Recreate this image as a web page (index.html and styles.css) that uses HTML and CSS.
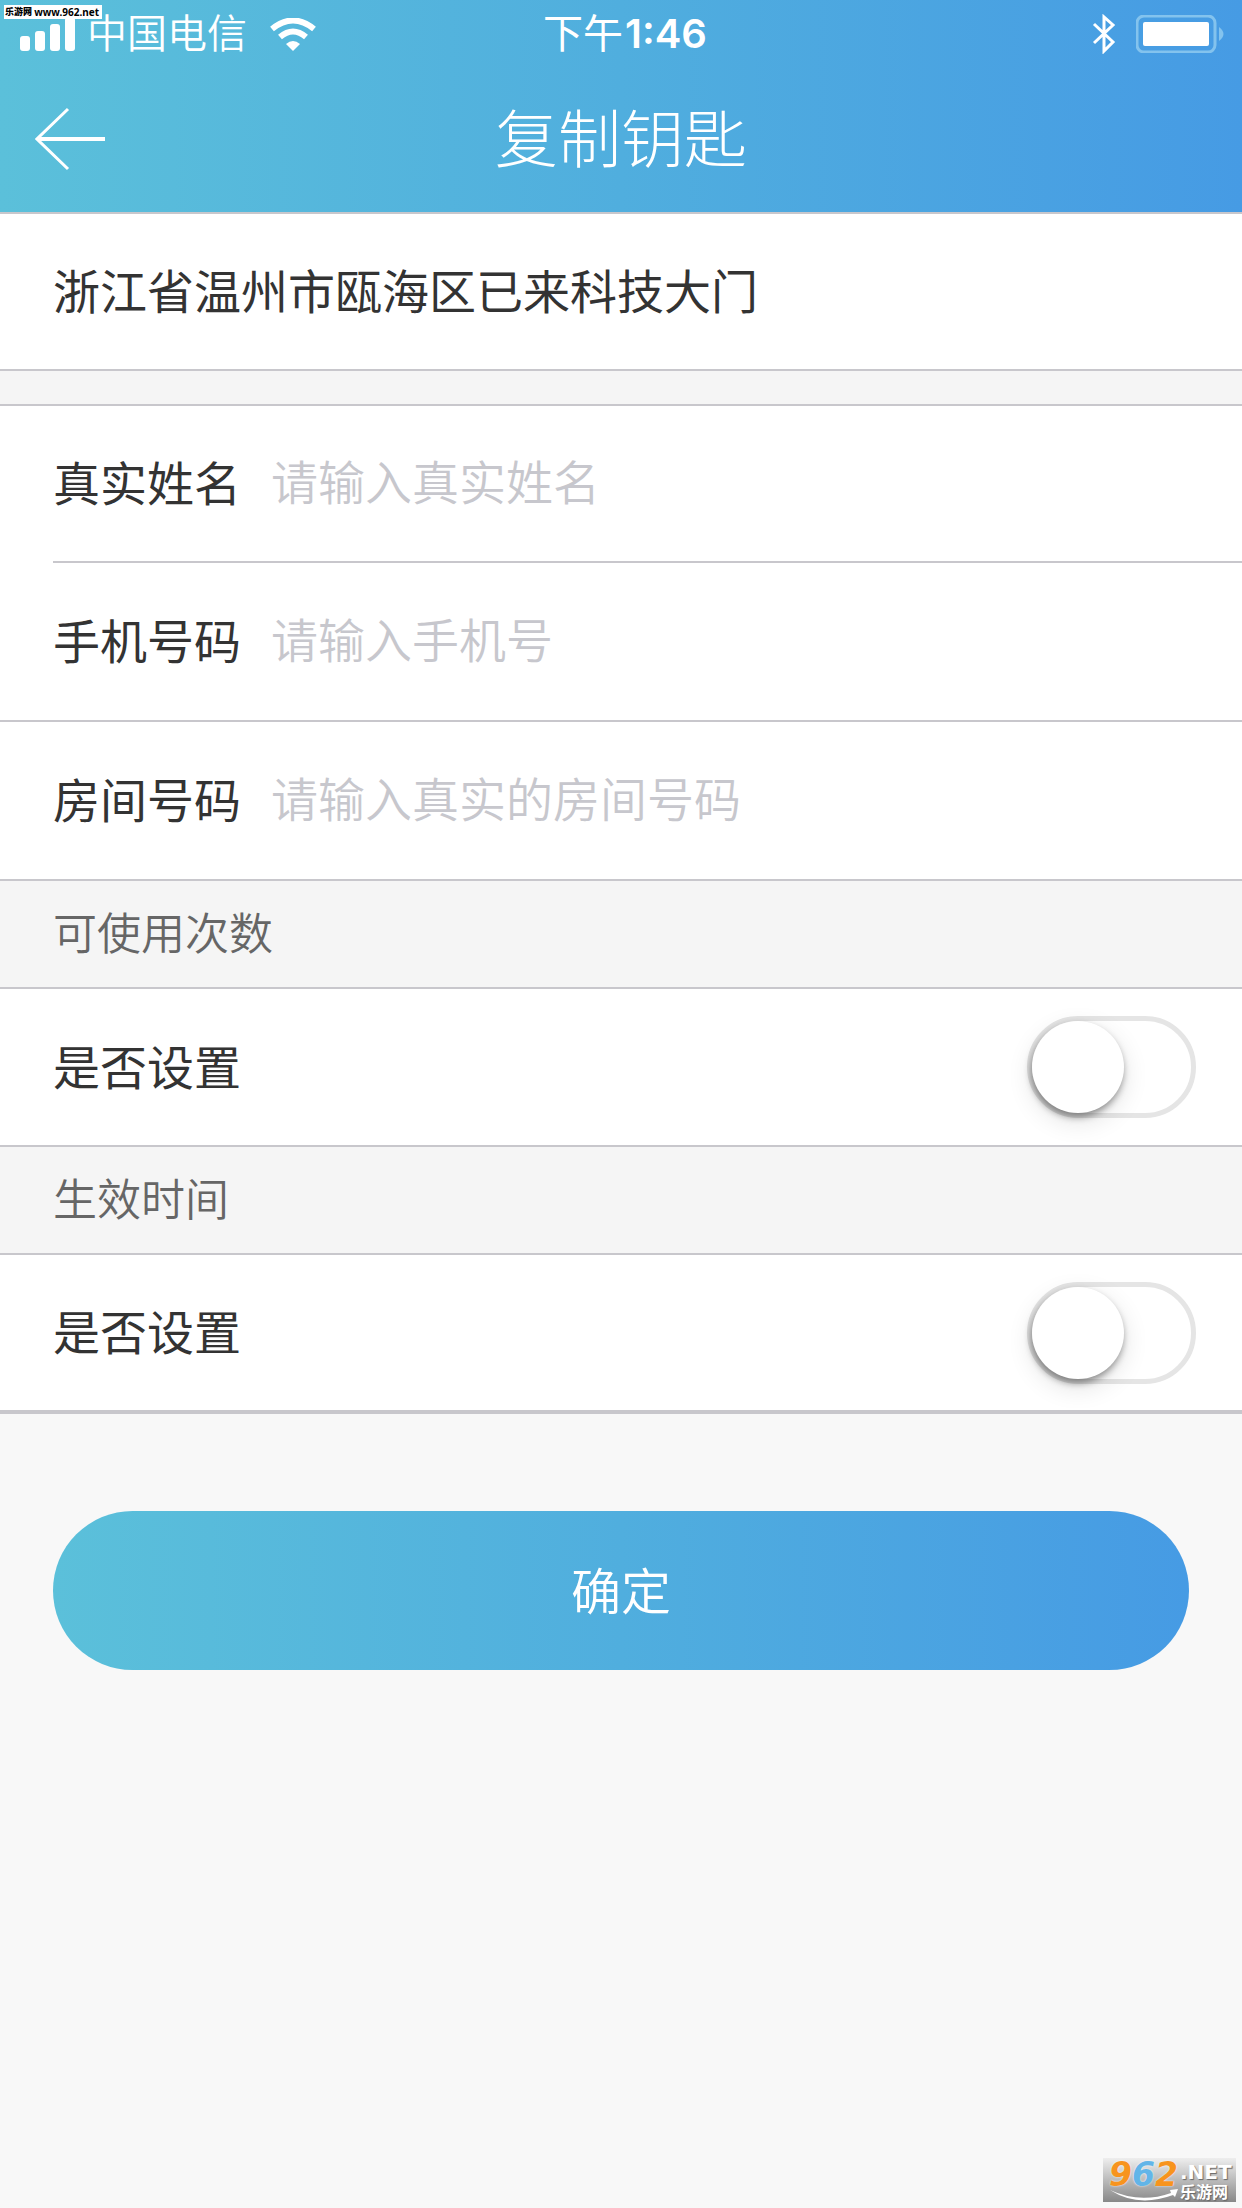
FILE: index.html
```html
<!DOCTYPE html>
<html lang="zh-CN">
<head>
  <meta charset="utf-8">
  <meta name="viewport" content="width=device-width, initial-scale=1">
  <title>复制钥匙</title>
  <link rel="stylesheet" href="styles.css">
</head>
<body>
  <header class="header">
    <div class="status">
      <div class="status-left">
        <svg class="signal" width="56" height="34" viewBox="0 0 56 34" fill="#fff">
          <rect x="0" y="19" width="10" height="15" rx="3"/>
          <rect x="15" y="14" width="10" height="20" rx="3"/>
          <rect x="30" y="7" width="10" height="27" rx="3"/>
          <rect x="45" y="0" width="10" height="34" rx="3"/>
        </svg>
        <span class="carrier">中国电信</span>
        <svg width="46" height="33" viewBox="0 0 46 33">
          <path d="M2 11Q23 -6 44 11" fill="none" stroke="#fff" stroke-width="6"/>
          <path d="M10 19Q23 8 36 19" fill="none" stroke="#fff" stroke-width="6"/>
          <path d="M16 26Q23 20 30 26L23 33Z" fill="#fff"/>
        </svg>
      </div>
      <span class="time">下午<b>1:46</b></span>
      <div class="status-right">
        <svg width="24" height="40" viewBox="0 0 24 40" fill="none" stroke="#fff" stroke-width="3">
          <path d="M2 10L21 28L12 37V3L21 11L2 29"/>
        </svg>
        <svg width="88" height="38" viewBox="0 0 88 38">
          <rect x="1" y="1" width="78" height="36" rx="7" fill="none" stroke="#83c3ee" stroke-width="3"/>
          <rect x="7" y="7" width="66" height="24" rx="2" fill="#fff"/>
          <path d="M83 12Q92 19 83 26Z" fill="#83c3ee"/>
        </svg>
      </div>
    </div>
    <div class="navbar">
      <button class="back" aria-label="返回">
        <svg width="72" height="64" viewBox="0 0 72 64" fill="none" stroke="#fff">
          <path d="M2 32H70" stroke-width="4"/>
          <path d="M33 2L2 32L33 62" stroke-width="3"/>
        </svg>
      </button>
      <h1>复制钥匙</h1>
    </div>
  </header>

  <form>
    <div class="row door"><span>浙江省温州市瓯海区已来科技大门</span></div>
    <div class="gap"></div>
    <div class="row">
      <label for="name">真实姓名</label>
      <input id="name" class="text" type="text" placeholder="请输入真实姓名">
    </div>
    <hr class="inset">
    <div class="row field">
      <label for="phone">手机号码</label>
      <input id="phone" class="text" type="tel" placeholder="请输入手机号">
    </div>
    <hr>
    <div class="row field">
      <label for="room">房间号码</label>
      <input id="room" class="text" type="text" placeholder="请输入真实的房间号码">
    </div>
    <h2>可使用次数</h2>
    <div class="row toggle">
      <label for="limitCount">是否设置</label>
      <input id="limitCount" class="switch" type="checkbox">
    </div>
    <h2>生效时间</h2>
    <div class="row toggle last">
      <label for="limitTime">是否设置</label>
      <input id="limitTime" class="switch" type="checkbox">
    </div>
    <div class="actions">
      <button class="submit" type="button">确定</button>
    </div>
  </form>

  <div class="site-tag"><b>乐游网</b><span>www.962.net</span></div>
  <div class="site-logo">
    <div class="digits">9<span class="blue">6</span>2</div>
    <div class="site-name"><b>.NET</b><span>乐游网</span></div>
    <svg class="swoosh" width="68" height="12" viewBox="0 0 68 12">
      <path d="M0 1Q30 15 61 4L60 1L68 0L65 8L63 6Q28 19 0 1Z" fill="#fff"/>
    </svg>
  </div>
</body>
</html>
```
FILE: styles.css
```css
* { box-sizing: border-box; }
body { margin: 0; min-height: 100vh; background: #f8f8f8; color: #333; font-family: Inter, "Noto Sans CJK SC", sans-serif; font-size: 47px; }
button, input { font: inherit; }

.header { color: #fff; background: linear-gradient(to right, #5bc0da, #50aede 50%, #469be4); border-bottom: 2px solid #c8c7cc; }
.status { display: grid; grid-template-columns: 1fr auto 1fr; align-items: center; height: 68px; padding: 0 18px 0 20px; font-size: 40px; line-height: 60px; font-weight: 350; }
.status svg { display: block; }
.status-left { display: flex; align-items: center; }
.carrier { margin: 0 23px 0 11px; }
.time { padding-left: 6px; font-weight: 400; }
.time b { margin-left: 2px; font-weight: 600; }
.status-right { display: flex; align-items: center; justify-content: flex-end; gap: 20px; }

.navbar { display: grid; grid-template-columns: 1fr auto 1fr; align-items: center; height: 144px; padding: 0 35px 2px; }
.back { justify-self: start; padding: 0; border: none; background: none; }
.back svg { display: block; }
h1 { margin: 0; font-size: 63px; font-weight: 300; line-height: 80px; }

form { background: #fff; }
.row { display: flex; align-items: center; height: 155px; padding: 0 46px 0 53px; }
.row label, .row span { padding-bottom: 6px; }
.gap { height: 37px; background: #f5f5f5; border-top: 2px solid #c8c7cc; border-bottom: 2px solid #c8c7cc; }
hr { margin: 0; border: none; border-top: 2px solid #c8c7cc; }
.inset { margin-left: 53px; }
.field { height: 157px; }
.text { flex: 1; min-width: 0; margin-left: 30px; padding: 0 0 2px; border: none; outline: none; background: none; color: #333; }
.text::placeholder { color: #c7c7cd; font-weight: 350; opacity: 1; }
h2 { margin: 0; padding: 0 53px; background: #f5f5f5; border-top: 2px solid #c8c7cc; border-bottom: 2px solid #c8c7cc; color: #666; font-size: 44px; font-weight: 350; line-height: 106px; }
.toggle { justify-content: space-between; height: 156px; }
.last { height: 159px; border-bottom: 4px solid #c8c7cc; }

.switch { appearance: none; width: 169px; height: 102px; margin: 0; border: 5px solid #e5e5e5; border-radius: 51px; background: #fff; }
.switch::before { content: ""; display: block; width: 92px; height: 92px; border-radius: 50%; background: #fff; box-shadow: -1px 4px 7px rgba(0, 0, 0, .4), 0 8px 26px rgba(0, 0, 0, .12); }
.switch:checked { background: #4fade0; border-color: #4fade0; }
.switch:checked::before { margin-left: 67px; }

.actions { padding: 97px 53px 0; background: #f8f8f8; }
.submit { display: block; width: 100%; height: 159px; padding: 0 0 5px; border: none; border-radius: 80px; background: linear-gradient(to right, #5bc0da, #50aede 50%, #469be4); color: #fff; font-size: 50px; font-weight: 350; }

.site-tag { position: absolute; top: 5px; left: 4px; display: flex; justify-content: space-between; width: 98px; height: 14px; padding: 0 3px 0 1px; background: #fff; color: #000; font-size: 9px; font-weight: 700; line-height: 14px; white-space: nowrap; }
.site-tag span { font-family: "Noto Sans", sans-serif; font-size: 10px; }
.site-logo { position: absolute; right: 6px; bottom: 6px; display: flex; width: 133px; height: 44px; padding-left: 6px; background: linear-gradient(#eee, #888); color: #fff; }
.digits { width: 71px; color: #f7941e; font-family: "DejaVu Sans", sans-serif; font-size: 33px; font-weight: 700; font-style: italic; line-height: 34px; text-shadow: 0 0 2px #fff; }
.blue { color: #62b5e8; }
.site-name { display: flex; flex-direction: column; font-size: 16px; font-weight: 700; line-height: 18px; text-shadow: 1px 1px 1px #666; }
.site-name b { padding-top: 3px; font-family: "DejaVu Sans", sans-serif; font-size: 20px; line-height: 22px; }
.swoosh { position: absolute; left: 7px; bottom: 1px; }
```
